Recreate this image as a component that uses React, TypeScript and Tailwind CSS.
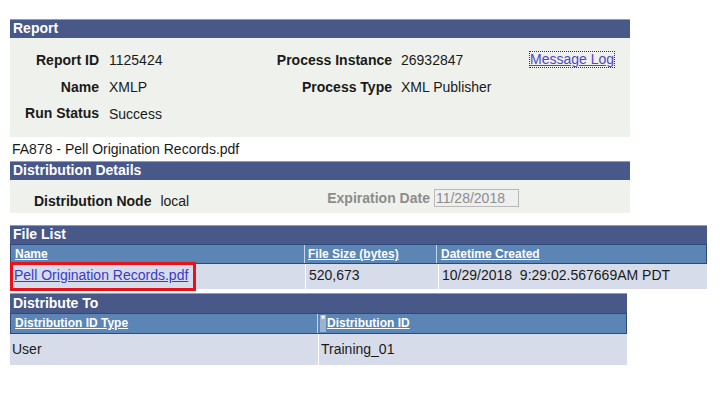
import React from "react";

const font = { fontFamily: '"Liberation Sans", Arial, sans-serif' };

function SectionHeader({ title, className = "" }: { title: string; className?: string }) {
  return (
    <div
      className={`h-[19px] bg-[#475889] border-t border-[#8e9cc2] text-white font-bold text-[14px] leading-[17px] pl-[3px] ${className}`}
    >
      {title}
    </div>
  );
}

function LabelValue({
  label,
  value,
  labelW,
  valueW,
  gap,
}: {
  label: string;
  value: string;
  labelW: string;
  valueW: string;
  gap: string;
}) {
  return (
    <>
      <div className={`${labelW} text-right font-bold text-[#1a1a1a]`}>{label}</div>
      <div className={`${gap} ${valueW} text-[#1a1a1a]`}>{value}</div>
    </>
  );
}

export default function App() {
  return (
    <div style={font} className="w-[727px] h-[401px] bg-white text-[14px] leading-[16px] text-[#1a1a1a] pt-[19px] pl-[10px]">
      {/* Report */}
      <div className="w-[620px]">
        <SectionHeader title="Report" />
        <div className="bg-[#eff1ec] pt-[8px] pb-[10px]">
          <div className="flex items-center h-[27px]">
            <LabelValue label="Report ID" value="1125424" labelW="w-[89px]" valueW="w-[165px]" gap="ml-[10px]" />
            <LabelValue label="Process Instance" value="26932847" labelW="w-[118px]" valueW="w-[129px]" gap="ml-[9px]" />
            <a className="text-[#5046c8] underline outline-1 outline-dotted outline-[#333] leading-[15px]">Message Log</a>
          </div>
          <div className="flex items-center h-[27px]">
            <LabelValue label="Name" value="XMLP" labelW="w-[89px]" valueW="w-[165px]" gap="ml-[10px]" />
            <LabelValue label="Process Type" value="XML Publisher" labelW="w-[118px]" valueW="w-[129px]" gap="ml-[9px]" />
          </div>
          <div className="flex items-center h-[27px]">
            <div className="w-[89px] text-right font-bold -mt-[2px]">Run Status</div>
            <div className="ml-[10px] mt-[1px]">Success</div>
          </div>
        </div>

        <div className="h-[24px] flex items-center pl-[2px]">FA878 - Pell Origination Records.pdf</div>

        {/* Distribution Details */}
        <SectionHeader title="Distribution Details" className="h-[18px] leading-[16px]" />
        <div className="bg-[#eff1ec] h-[33px] flex items-center">
          <div className="ml-[24px] font-bold mt-[9px]">Distribution Node</div>
          <div className="ml-[9px] mt-[9px]">local</div>
          <div className="ml-[138px] font-bold text-[#8c8c8c] mt-[3px]">Expiration Date</div>
          <div className="ml-[4px] mt-[3px] w-[85px] h-[18px] border border-[#b9b9b9] bg-[#efefef] text-[#8c8c8c] pl-[1px] leading-[16px]">
            11/28/2018
          </div>
        </div>
      </div>

      {/* File List */}
      <div className="w-[697px] mt-[12px]">
        <SectionHeader title="File List" />
        <div className="flex h-[20px] border border-[#2f4a7a] bg-[#5b85b4] text-white font-bold text-[12px] leading-[18px]">
          <div className="w-[294px] pl-[4px] border-r border-[#c9d5e6]"><span className="underline">Name</span></div>
          <div className="w-[132px] pl-[3px] border-r border-[#c9d5e6]"><span className="underline">File Size (bytes)</span></div>
          <div className="flex-1 pl-[4px]"><span className="underline">Datetime Created</span></div>
        </div>
        <div className="flex h-[25px] text-[14px] leading-[23px]">
          <div className="relative w-[295px] bg-[#d6dce9] pl-[4px]">
            <a className="text-[#3a3acd] underline">Pell Origination Records.pdf</a>
            <div className="absolute left-0 top-[-2px] w-[186px] h-[29px] border-[3px] border-[#e8121a]" />
          </div>
          <div className="w-[132px] ml-[1px] bg-[#d6dce9] pl-[3px]">520,673</div>
          <div className="flex-1 ml-[1px] bg-[#d6dce9] pl-[3px] whitespace-pre">10/29/2018  9:29:02.567669AM PDT</div>
        </div>
      </div>

      {/* Distribute To */}
      <div className="w-[617px] mt-[4px]">
        <SectionHeader title="Distribute To" className="h-[20px] leading-[18px]" />
        <div className="flex h-[21px] border border-[#2f4a7a] bg-[#5b85b4] text-white font-bold text-[12px] leading-[19px]">
          <div className="w-[307px] pl-[4px] border-r border-[#c9d5e6]"><span className="underline">Distribution ID Type</span></div>
          <div className="flex-1 pl-[2px] flex items-center">
            <span className="inline-block w-[6px] h-[17px] bg-[#9db2d0] text-[10px] leading-[10px] text-white text-center mr-[1px]">*</span>
            <span className="underline">Distribution ID</span>
          </div>
        </div>
        <div className="flex h-[31px] items-center">
          <div className="w-[308px] h-full bg-[#d6dce9] pl-[2px] pt-[7px]">User</div>
          <div className="flex-1 h-full ml-[1px] bg-[#d6dce9] pl-[2px] pt-[7px]">Training_01</div>
        </div>
      </div>
    </div>
  );
}
